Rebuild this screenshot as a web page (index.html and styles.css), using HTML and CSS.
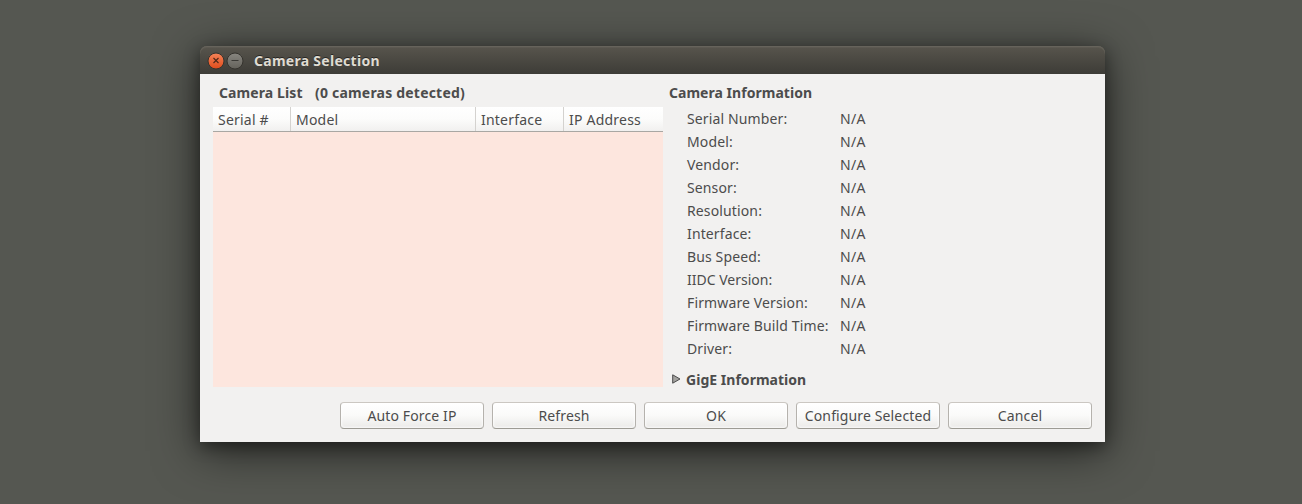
FILE: index.html
```html
<!DOCTYPE html>
<html lang="en">
<head>
<meta charset="utf-8">
<title>Camera Selection</title>
<link rel="stylesheet" href="styles.css">
</head>
<body>
<main class="window">
  <header class="titlebar">
    <svg class="control" viewBox="0 0 18 18" aria-label="Close">
      <defs><linearGradient id="close-fill" x1="0" y1="0" x2="0" y2="1"><stop offset="0" stop-color="#f58459"/><stop offset="1" stop-color="#df4b1b"/></linearGradient></defs>
      <circle cx="9" cy="9" r="8" fill="url(#close-fill)" stroke="#35332e"/>
      <path d="M6.500 6l5 5M11.500 6l-5 5" stroke="#4c2819" stroke-width="1.1"/>
    </svg>
    <svg class="control" viewBox="0 0 18 18" aria-label="Minimize">
      <defs><linearGradient id="min-fill" x1="0" y1="0" x2="0" y2="1"><stop offset="0" stop-color="#888680"/><stop offset="1" stop-color="#64625b"/></linearGradient></defs>
      <circle cx="9" cy="9" r="8" fill="url(#min-fill)" stroke="#35332e"/>
      <path d="M5.500 8.500h7" stroke="#3a3935"/>
    </svg>
    <h1 class="title">Camera Selection</h1>
  </header>
  <div class="content">
    <div class="panes">
      <section class="list-pane">
        <h2 class="heading list-heading"><span class="list-name">Camera List</span><span class="list-count">(0 cameras detected)</span></h2>
        <div class="table">
          <div class="columns">
            <div class="column">Serial #</div>
            <div class="column">Model</div>
            <div class="column">Interface</div>
            <div class="column">IP Address</div>
          </div>
          <div class="rows"></div>
        </div>
      </section>
      <section class="info-pane">
        <h2 class="heading">Camera Information</h2>
        <dl class="info">
          <dt>Serial Number:</dt><dd>N/A</dd>
          <dt>Model:</dt><dd>N/A</dd>
          <dt>Vendor:</dt><dd>N/A</dd>
          <dt>Sensor:</dt><dd>N/A</dd>
          <dt>Resolution:</dt><dd>N/A</dd>
          <dt>Interface:</dt><dd>N/A</dd>
          <dt>Bus Speed:</dt><dd>N/A</dd>
          <dt class="iidc">IIDC Version:</dt><dd>N/A</dd>
          <dt>Firmware Version:</dt><dd>N/A</dd>
          <dt>Firmware Build Time:</dt><dd>N/A</dd>
          <dt>Driver:</dt><dd>N/A</dd>
        </dl>
        <div class="expander">
          <svg class="arrow" viewBox="0 0 9 10"><path d="M.7.8v8.400L8 5z" fill="#a3a29f" stroke="#4c4c4c"/></svg>
          <h2 class="heading">GigE Information</h2>
        </div>
      </section>
    </div>
    <footer class="actions">
      <button class="button">Auto Force IP</button>
      <button class="button">Refresh</button>
      <button class="button">OK</button>
      <button class="button">Configure Selected</button>
      <button class="button">Cancel</button>
    </footer>
  </div>
</main>
</body>
</html>
```
FILE: styles.css
```css
* { box-sizing: border-box; }

body {
  margin: 0;
  height: 504px;
  padding: 46px 197px 0 200px;
  overflow: hidden;
  background: #555751;
  color: #4c4c4c;
  font: 14px/20px "Noto Sans", sans-serif;
}

.window {
  height: 396px;
  border-radius: 7px 7px 0 0;
  box-shadow: 0 9px 46px rgba(0, 0, 0, .6), 0 4px 16px rgba(0, 0, 0, .4);
}

.titlebar {
  display: flex;
  align-items: center;
  height: 28px;
  padding: 1px 0 0 7px;
  gap: 1px;
  border-radius: 7px 7px 0 0;
  background: linear-gradient(#58554d, #3d3c37);
  box-shadow: inset 0 1px #66635b, inset 0 2px #5c5951;
}

.control { width: 18px; height: 18px; flex: none; }

.title {
  margin: 0 0 0 9px;
  color: #dfdbd2;
  font-size: 14px;
  line-height: 20px;
  letter-spacing: .28px;
  text-shadow: 0 -1px rgba(0, 0, 0, .5);
}

.content {
  height: 368px;
  padding: 9px 13px 0;
  background: #f2f1f0;
}

.panes { display: flex; height: 319px; gap: 6px; }
.list-pane { width: 450px; }
.info-pane { flex: 1; }

.heading {
  margin: 0;
  font-size: 14px;
  line-height: 20px;
  letter-spacing: .03px;
  white-space: nowrap;
}

.list-heading { display: flex; padding-left: 6px; }
.list-name { width: 96px; letter-spacing: .1px; }
.list-count { letter-spacing: .2px; }

.table { margin-top: 4px; height: 280px; background: #fde6de; }

.columns {
  display: grid;
  grid-template-columns: 78px 185px 88px 99px;
  height: 25px;
  border-bottom: 1px solid #a9a7a3;
  background: linear-gradient(#fff, #fcfcfb 50%, #f1f0ef);
}

.column {
  padding: 3px 0 0 5px;
  border-right: 1px solid #d4d2cf;
  letter-spacing: .22px;
  white-space: nowrap;
}
.column:last-child { border-right: 0; }

.info {
  display: grid;
  grid-template-columns: 153px 1fr;
  grid-auto-rows: 23px;
  margin: 4px 0 0;
  padding-left: 18px;
  line-height: 23px;
  letter-spacing: .13px;
  white-space: nowrap;
}

.info dd { margin: 0; letter-spacing: .3px; }
.info .iidc { letter-spacing: 0; }

.expander { display: flex; align-items: center; margin-top: 10px; padding-left: 3px; }
.arrow { width: 9px; height: 10px; margin: 0 5px 2px 0; }

.actions { display: flex; justify-content: flex-end; gap: 8px; }

.button {
  width: 144px;
  height: 27px;
  padding: 1px 0 0;
  border: 1px solid #b5b2ad;
  border-top-color: #cbc7c2;
  border-bottom-color: #9d9b94;
  border-radius: 4px;
  background: linear-gradient(#fff, #fafaf9 50%, #ebeae8);
  box-shadow: inset 0 0 2px 1px rgba(255, 255, 255, .7);
  color: inherit;
  font: inherit;
  letter-spacing: .13px;
  white-space: nowrap;
}
```
